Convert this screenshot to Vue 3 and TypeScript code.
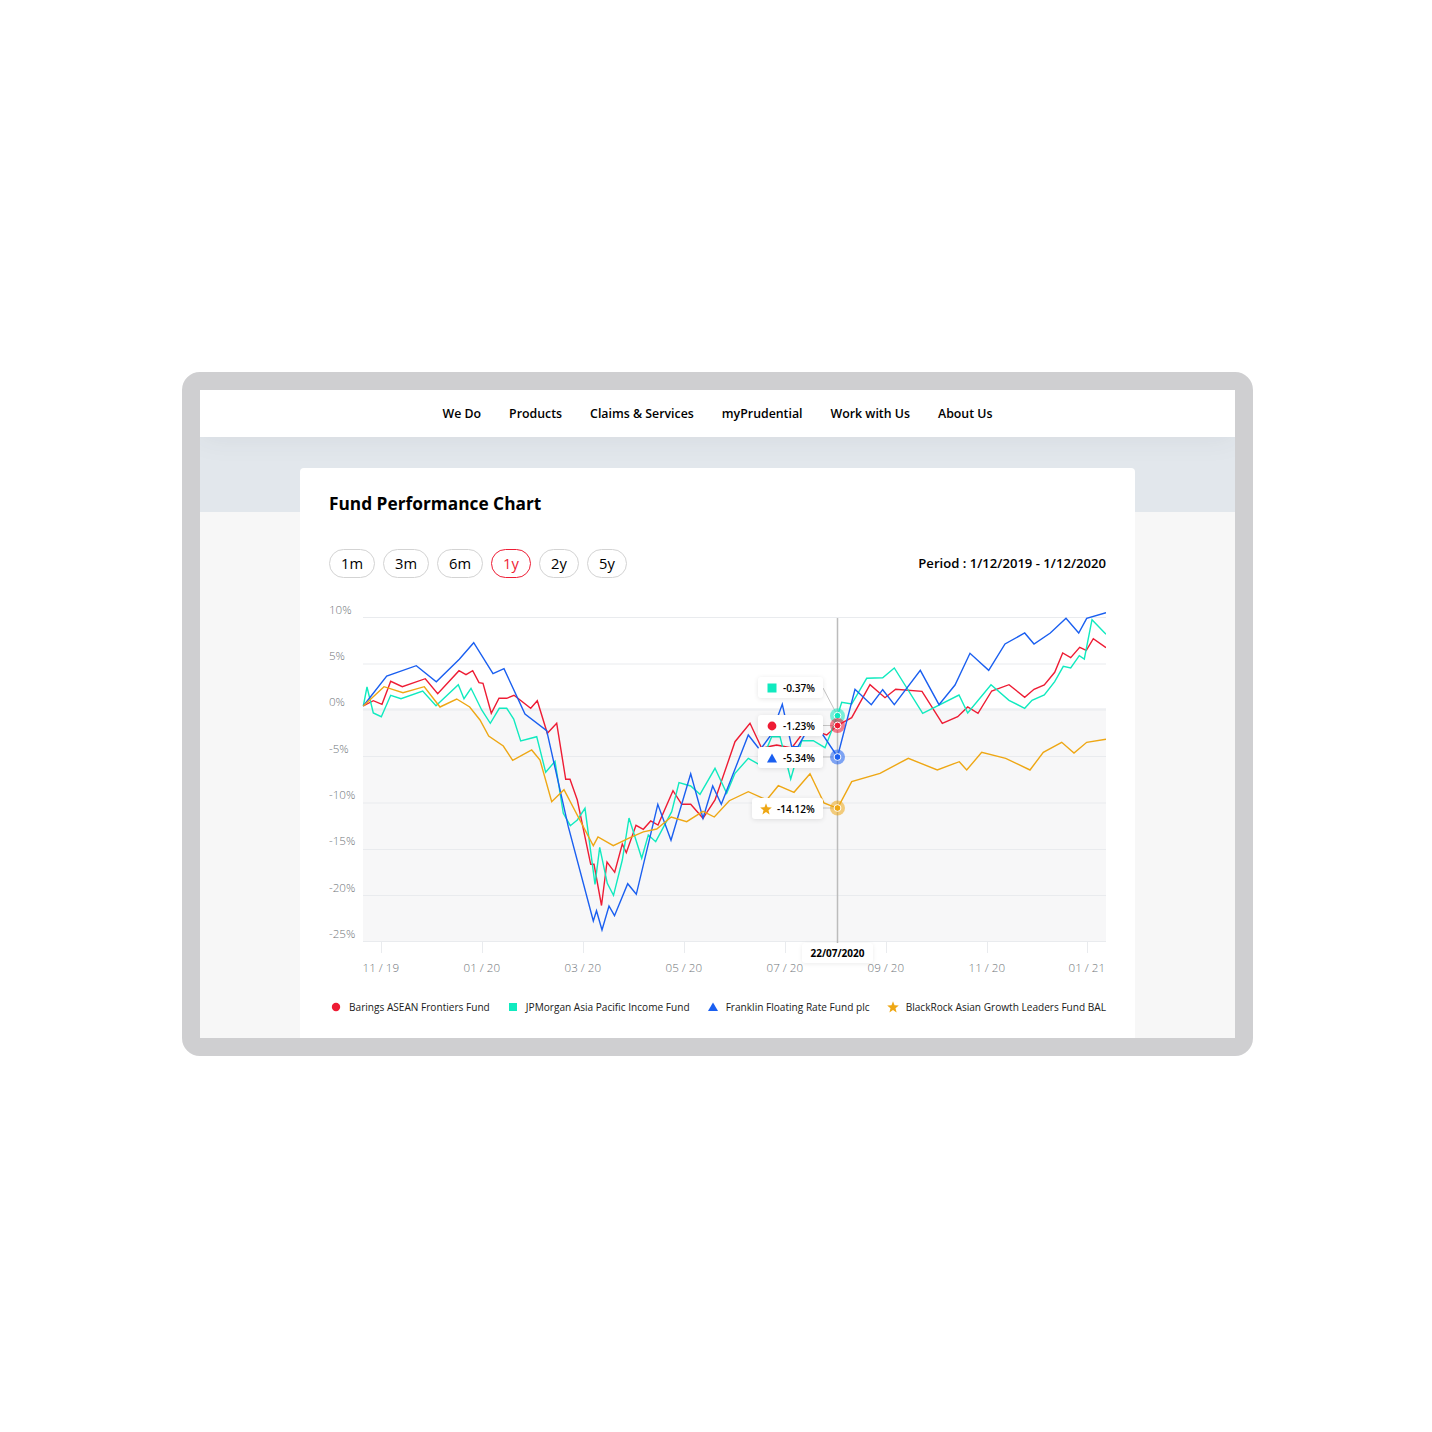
<script setup lang="ts">
// --- Static chart data (page coordinates, the svg viewBox starts at 329,600) ---
interface Series {
  name: string;
  color: string;
  points: string;
}

const navItems = ['We Do', 'Products', 'Claims & Services', 'myPrudential', 'Work with Us', 'About Us'];
const periods = ['1m', '3m', '6m', '1y', '2y', '5y'];

const yAxis = [
  { label: '10%', line: 617.5, text: 614 },
  { label: '5%', line: 664, text: 660 },
  { label: '0%', line: 710, text: 706 },
  { label: '-5%', line: 756.5, text: 753 },
  { label: '-10%', line: 803, text: 799 },
  { label: '-15%', line: 849.5, text: 845 },
  { label: '-20%', line: 895.5, text: 892 },
  { label: '-25%', line: 941.5, text: 938 }
];

const xAxis = [
  { label: '11 / 19', x: 381.5 },
  { label: '01 / 20', x: 482.5 },
  { label: '03 / 20', x: 583.5 },
  { label: '05 / 20', x: 684.5 },
  { label: '07 / 20', x: 785.5 },
  { label: '09 / 20', x: 886.5 },
  { label: '11 / 20', x: 987.5 },
  { label: '01 / 21', x: 1087.5 }
];

const series: Series[] = [
  {
    name: 'red',
    color: '#ee1c34',
    points: '363.3,706 373.3,700.7 382,704.3 390.7,681.3 402.3,686.7 425.3,678.7 437.7,693.7 459,670.7 466,674.7 472.7,670.7 479,682.7 483,683.3 491.3,713.3 499,698.3 506.7,698.3 514,695.3 530.7,708.3 537.3,700.7 547.3,733.3 556.7,723.3 565.7,779.3 570,779.3 577.3,800 590.7,864.3 594,864.3 601.5,905.5 607,862 614.7,872.3 622.3,844 626.3,852.7 636,825.3 643.3,829.3 650.7,821 658,825 673,790.7 681.7,804.3 690.7,804.3 703,818.3 715,800 735,741.7 750,723.3 761.7,748.3 771.7,746 776.7,745 791.7,748 806.7,728 826.7,735 837.5,725.3 851.7,717.7 870,684.7 885,697.7 895.7,689.3 922,691.3 942.3,723.3 957.7,716.7 967.7,707 978,713.3 991.7,691 1009,684.7 1024.7,697.3 1034,689.3 1044.3,685 1054.7,672.3 1062.7,653 1070.7,657.7 1079.7,647.3 1086.3,650.3 1093.3,638.7 1106,647.7'
  },
  {
    name: 'teal',
    color: '#10eabf',
    points: '363.3,706 367,687 373.3,713 381.3,716.7 390.7,695.3 401,698.7 422.7,691 436,705.7 458.3,684.7 464,698.7 471,688.3 481.7,710 490.3,723.3 499.3,708.3 506.7,708.3 513.7,719 520.7,741 536.7,736.7 545.7,772.3 555,761.3 563.3,813.3 570.3,825.7 577.3,820 585,808.3 595,884.3 599.7,847.3 607.3,883.3 613.5,895.3 622.3,860 629,818 641.7,858.3 648.3,835 655.7,841.7 671.7,811.7 679,782.7 690.7,786 700,794.3 715,768.3 726.7,793.3 735,773.3 748.3,758.3 760,765 771.7,736.7 780,736.7 790.7,779 801.7,740.7 813.3,740.7 825,747.7 837.5,715.7 841.7,702.3 851.7,704 866.7,678.3 882.7,677.7 894.3,668 922.7,713.3 959,695 967.7,713 991,684.7 1009,700.3 1024.7,708.3 1032,700.3 1044.3,695 1054.7,681.7 1063.3,666.3 1070.7,668 1079.3,655.7 1084.3,659 1092,619.7 1106,634.3'
  },
  {
    name: 'blue',
    color: '#1a5ff0',
    points: '363.3,706 386.7,676 416.3,665.7 436.3,681.7 459.3,659.3 473.7,642.7 493,673.7 504,668.7 525,714 546.7,730.7 568.3,826.7 593.3,921 596.5,910.7 602,930 609,906 614.5,915.7 627.7,883.7 636.3,894.3 657.8,804.3 671,840.2 690.7,773.7 703,818.3 712.7,786 721.3,804.3 748.3,735 760,750 771,735 782.3,704.3 791.7,746.7 798,746.7 813,720 837.5,756.7 855,689.3 871.3,704.7 882.7,689.7 894.3,704.7 920.3,670.3 939,704.7 955,685 970,653.3 988.7,670.3 1005,644 1024.7,633 1034,644 1050.3,633 1066,618.3 1078.7,633 1086.7,618.3 1106,612.7'
  },
  {
    name: 'gold',
    color: '#eea714',
    points: '363.3,706 384,686.7 403,692.7 424.3,686.7 440,707 456.7,699 469.7,707 480,720 488.7,736 503.3,746 512.7,760.3 531.7,750 540,760 551.7,801.7 564,789.7 593.3,845.7 598,837 613.3,845.7 630,837.7 643.3,831.9 656.7,829 671.2,817 686.7,821.7 703,811.3 714.3,817 729.3,800.7 748.3,791.7 766.7,800 778.3,785.7 794,792.3 810,773.7 824,803 837.5,808.3 851.7,781.7 880,773.3 908.3,758.3 937.3,770 959.3,761.7 966.7,770 981.7,752.3 1005.7,758.3 1030,770 1043.3,752.3 1061.7,742.3 1074,753 1086.7,742.3 1106,739.3'
  }
];

const markers = [
  { color: '#10eabf', y: 715.7, fromX: 823, fromY: 688 },
  { color: '#ee1c34', y: 725.5, fromX: 823, fromY: 725.5 },
  { color: '#1a5ff0', y: 757, fromX: 823, fromY: 757 },
  { color: '#eea714', y: 808, fromX: 823, fromY: 808 }
];

// top / width relative to the chart box, computed from the page coords above
const tips = [
  { value: '-0.37%', icon: 'square', top: 77, width: 65 },
  { value: '-1.23%', icon: 'circle', top: 115, width: 65 },
  { value: '-5.34%', icon: 'triangle', top: 147, width: 65 },
  { value: '-14.12%', icon: 'star', top: 198, width: 71 }
];

const legend = [
  { label: 'Barings ASEAN Frontiers Fund', icon: 'circle' },
  { label: 'JPMorgan Asia Pacific Income Fund', icon: 'square' },
  { label: 'Franklin Floating Rate Fund plc', icon: 'triangle' },
  { label: 'BlackRock Asian Growth Leaders Fund BAL', icon: 'star' }
];
</script>

<template>
  <div class="page">
    <div class="frame">
      <nav class="nav">
        <a v-for="item in navItems" :key="item">{{ item }}</a>
      </nav>
      <div class="band"></div>
      <section class="card">
        <h1 class="title">Fund Performance Chart</h1>
        <div class="toolbar">
          <div class="pills">
            <button v-for="p in periods" :key="p" class="pill" :class="{ active: p === '1y' }">{{ p }}</button>
          </div>
          <div class="period">Period : 1/12/2019 - 1/12/2020</div>
        </div>

        <div class="chart">
          <svg class="plot" width="777" height="385" viewBox="329 600 777 385">
            <rect x="363" y="710" width="743" height="231.5" fill="#f7f7f8" />
            <rect x="363" y="708" width="743" height="2" fill="#f2f3f5" />
            <line
              v-for="row in yAxis"
              :key="row.label"
              x1="363"
              x2="1106"
              :y1="row.line"
              :y2="row.line"
              class="grid"
            />
            <text v-for="row in yAxis" :key="row.label + 't'" x="329" :y="row.text" class="axis">{{ row.label }}</text>
            <line
              v-for="tick in xAxis"
              :key="tick.label"
              :x1="tick.x"
              :x2="tick.x"
              y1="941"
              y2="953"
              class="grid"
            />
            <text
              v-for="tick in xAxis"
              :key="tick.label + 't'"
              :x="tick.x - 0.7"
              y="972"
              text-anchor="middle"
              class="axis"
            >{{ tick.label }}</text>

            <polyline
              v-for="s in series"
              :key="s.name"
              :points="s.points"
              :stroke="s.color"
              fill="none"
              stroke-width="1.4"
              stroke-linejoin="miter"
            />

            <line x1="837.5" x2="837.5" y1="618" y2="945" stroke="#bcbcbc" stroke-width="1.5" />
            <line
              v-for="m in markers"
              :key="m.color + 'l'"
              :x1="m.fromX"
              :y1="m.fromY"
              x2="837.5"
              :y2="m.y"
              stroke="#c4c4c4"
              stroke-width="1"
            />
            <g v-for="m in markers" :key="m.color">
              <circle cx="837.5" :cy="m.y" r="7.5" :fill="m.color" opacity="0.55" />
              <circle cx="837.5" :cy="m.y" r="3.4" :fill="m.color" stroke="#fff" stroke-width="1" />
            </g>
          </svg>

          <div
            v-for="tip in tips"
            :key="tip.value"
            class="tip"
            :style="{ top: tip.top + 'px', width: tip.width + 'px' }"
          >
            <svg width="12" height="12" viewBox="0 0 12 12" class="tip-icon">
              <rect v-if="tip.icon === 'square'" x="1.5" y="1.5" width="9" height="9" fill="#10eabf" />
              <circle v-else-if="tip.icon === 'circle'" cx="6" cy="6" r="4.4" fill="#ee1c34" />
              <polygon v-else-if="tip.icon === 'triangle'" points="6,1.5 11,10.5 1,10.5" fill="#1a5ff0" />
              <polygon
                v-else
                points="6,0.3 7.5,4.2 11.8,4.5 8.5,7.2 9.6,11.5 6,9.1 2.4,11.5 3.5,7.2 0.2,4.5 4.5,4.2"
                fill="#eea714"
              />
            </svg>
            <span>{{ tip.value }}</span>
          </div>

          <div class="date-tip">22/07/2020</div>
        </div>

        <div class="legend">
          <div v-for="item in legend" :key="item.label" class="legend-item">
            <svg width="12" height="12" viewBox="0 0 12 12">
              <rect v-if="item.icon === 'square'" x="2" y="2" width="8" height="8" fill="#10eabf" />
              <circle v-else-if="item.icon === 'circle'" cx="6" cy="6" r="4.2" fill="#ee1c34" />
              <polygon v-else-if="item.icon === 'triangle'" points="6,1.5 11,10 1,10" fill="#1a5ff0" />
              <polygon
                v-else
                points="6,0.3 7.5,4.2 11.8,4.5 8.5,7.2 9.6,11.5 6,9.1 2.4,11.5 3.5,7.2 0.2,4.5 4.5,4.2"
                fill="#eea714"
              />
            </svg>
            <span>{{ item.label }}</span>
          </div>
        </div>
      </section>
    </div>
  </div>
</template>

<style scoped>
.page {
  height: 1432px;
  box-sizing: border-box;
  padding: 372px 0 0 182px;
  background: #fff;
  font-family: 'Open Sans', 'Liberation Sans', sans-serif;
  color: #000;
}

.frame {
  width: 1035px;
  height: 648px;
  border: 18px solid #cfcfd1;
  border-radius: 18px;
  background: #f7f7f7;
  overflow: hidden;
  display: flex;
  flex-direction: column;
}

.nav {
  flex: none;
  position: relative;
  z-index: 1;
  height: 47px;
  background: #fff;
  display: flex;
  justify-content: center;
  align-items: center;
  gap: 28px;
  font-size: 12.35px;
  font-weight: 600;
  box-shadow: 0 0 30px rgba(60, 70, 80, 0.08);
}

.band {
  flex: none;
  height: 75px;
  background: #e2e7ec;
}

.card {
  flex: 1;
  position: relative;
  margin: -44px 100px 0;
  padding: 0 29px;
  background: #fff;
  border-radius: 4px 4px 0 0;
}

.title {
  margin: 0;
  padding-top: 24px;
  font-size: 17.3px;
  line-height: 24px;
  font-weight: 700;
}

.toolbar {
  display: flex;
  justify-content: space-between;
  align-items: center;
  margin-top: 33px;
}

.pills {
  display: flex;
  gap: 8px;
}

.pill {
  box-sizing: border-box;
  height: 29px;
  padding: 0 0 2px;
  width: 46px;
  border: 1px solid #d3d3d3;
  border-radius: 15px;
  background: #fff;
  color: #000;
  font: 400 14.7px 'Open Sans', sans-serif;
}

.pill:nth-child(n + 4) {
  width: 40px;
}

.pill.active {
  border-color: #ee1c34;
  color: #ee1c34;
}

.period {
  padding-bottom: 1px;
  font-size: 13.1px;
  font-weight: 600;
}

.chart {
  position: relative;
  height: 385px;
  margin-top: 22px;
}

.plot {
  display: block;
}

.grid {
  stroke: #e9ebee;
  stroke-width: 1;
}

.axis {
  font-size: 11.6px;
  font-weight: 300;
  fill: #6f757a;
}

.tip {
  position: absolute;
  right: 283px;
  height: 21px;
  box-sizing: border-box;
  padding-left: 8px;
  display: flex;
  align-items: center;
  gap: 5px;
  background: #fff;
  border-radius: 3px;
  box-shadow: 0 1px 5px rgba(0, 0, 0, 0.1);
  font-size: 10.1px;
  font-weight: 600;
}

.tip-icon {
  flex: none;
}

.date-tip {
  position: absolute;
  left: 473px;
  top: 343px;
  width: 71px;
  height: 20px;
  display: flex;
  align-items: center;
  justify-content: center;
  background: #fff;
  border-radius: 3px;
  box-shadow: 0 1px 4px rgba(0, 0, 0, 0.08);
  font-size: 10px;
  font-weight: 700;
}

.legend {
  display: flex;
  justify-content: space-between;
  align-items: center;
  margin-top: 15px;
  padding-left: 1px;
  font-size: 10.1px;
  color: #1a1a1a;
}

.legend-item {
  display: flex;
  align-items: center;
  gap: 7px;
  white-space: nowrap;
}
</style>

<style>
html, body { background: #fff; }
</style>
